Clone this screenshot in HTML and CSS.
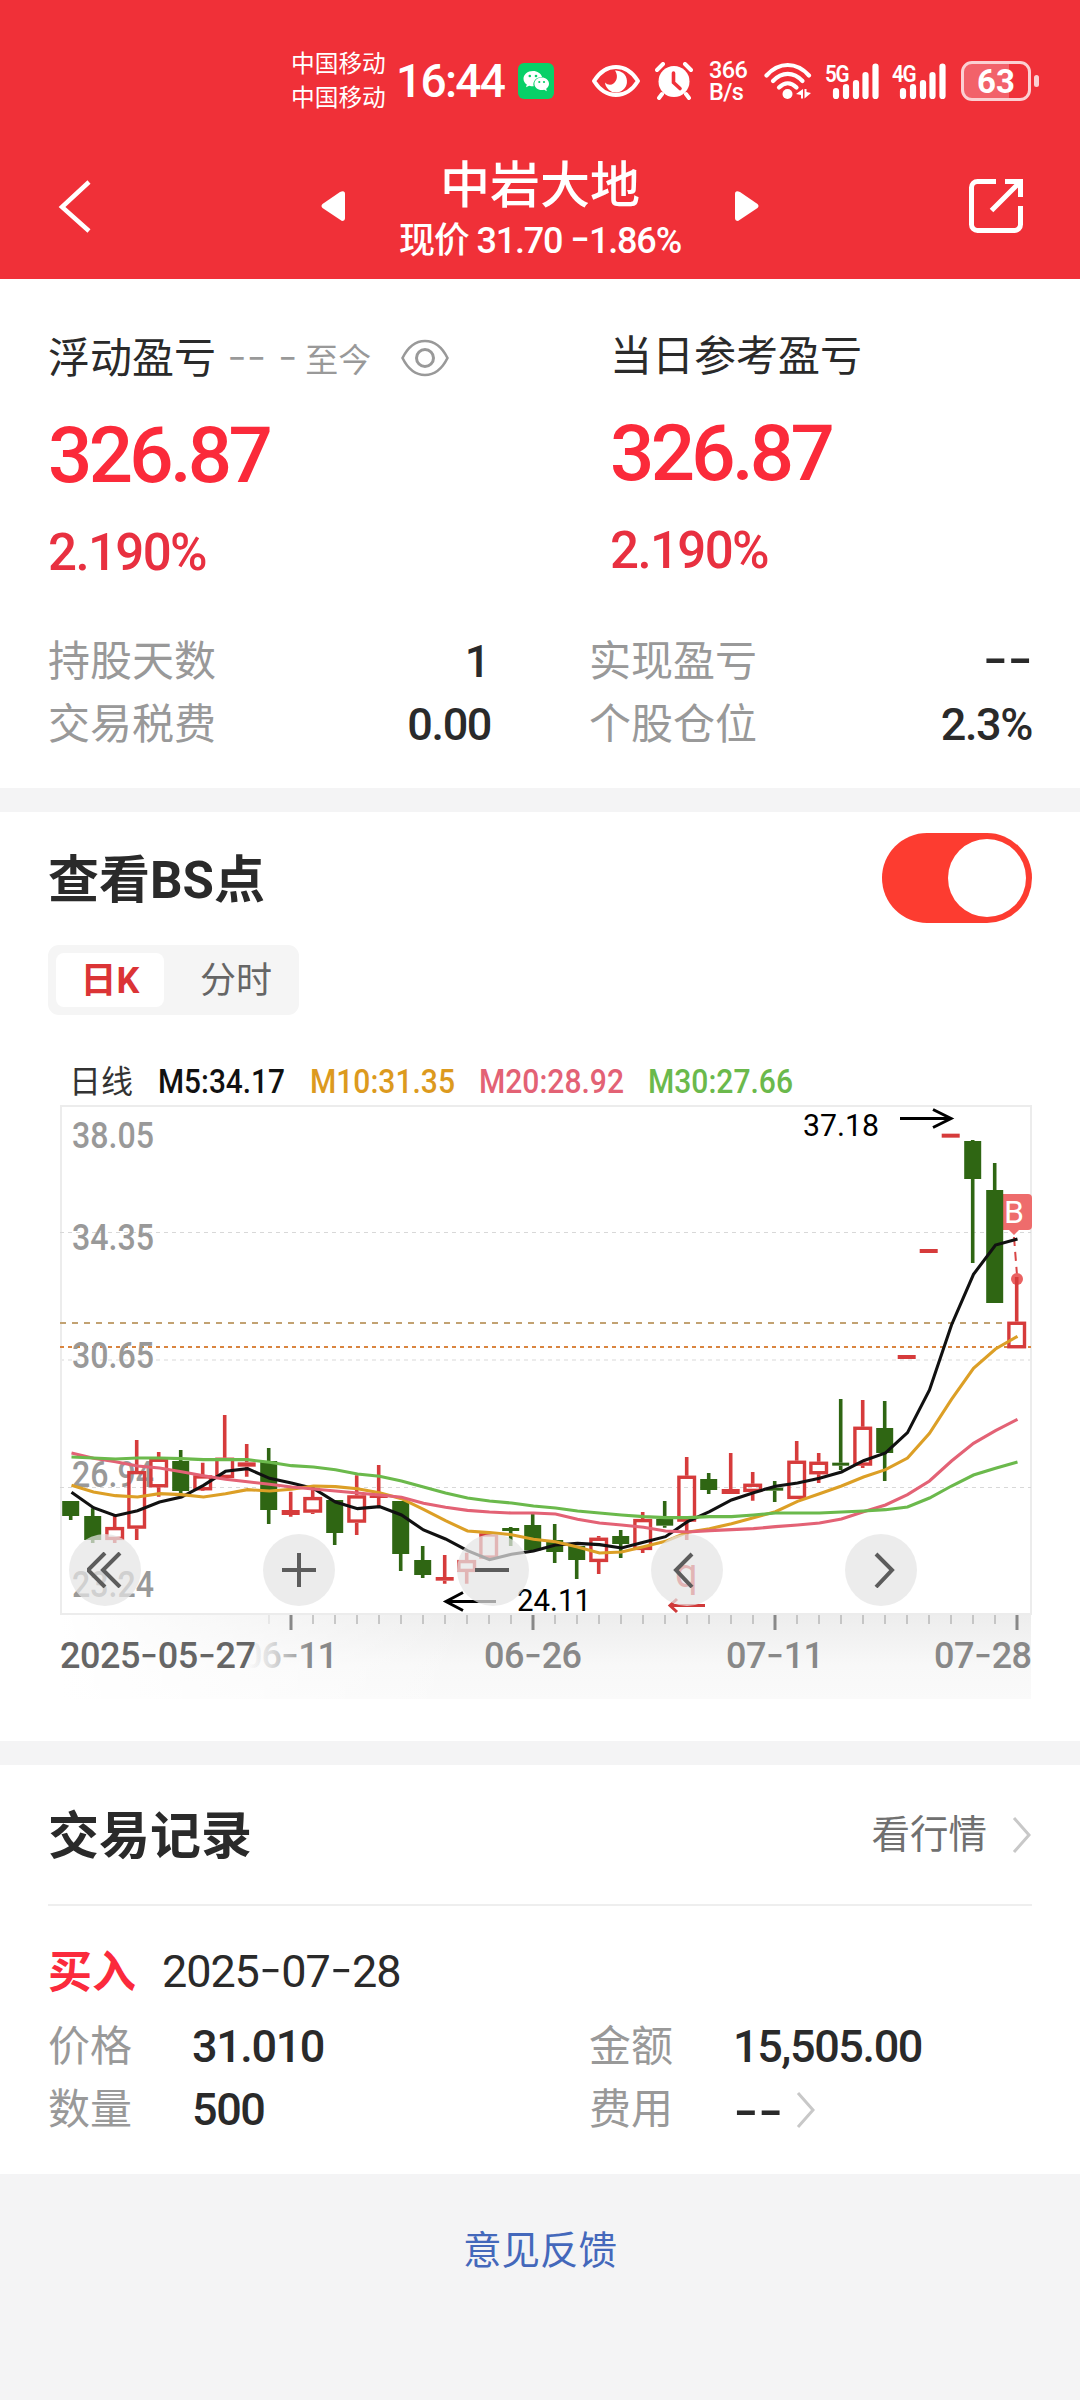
FILE: index.html
```html
<!DOCTYPE html>
<html lang="zh-CN">
<head>
<meta charset="utf-8">
<title>中岩大地</title>
<link rel="stylesheet" href="styles.css">
</head>
<body>
<header class="header">
  <div class="status">
    <div class="carrier"><span>中国移动</span><span>中国移动</span></div>
    <div class="clock">16:44</div>
    <svg class="wechat" width="36" height="36" viewBox="0 0 36 36"><rect width="36" height="36" rx="6" fill="#08d068"/><path d="M15 8c-5.500 0-9.500 3.500-9.500 7.700 0 2.300 1.300 4.400 3.300 5.800L8 24.300l3.200-1.600c1.300.4 2.600.6 3.800.6h.7c-1.500-5 2.600-9.300 8.400-9.300C23 10.500 19.300 8 15 8z" fill="#fff"/><path d="M31 20.800c0-3.600-3.300-6.300-7.300-6.300s-7.300 2.700-7.300 6.300 3.300 6.300 7.300 6.300c.9 0 1.700-.1 2.500-.4l2.600 1.500-.6-2.500c1.700-1.200 2.800-2.900 2.800-4.900z" fill="#fff"/><g fill="#08d068"><circle cx="11.800" cy="13" r="1.300"/><circle cx="18" cy="13" r="1.300"/><circle cx="21.300" cy="19" r="1.100"/><circle cx="26" cy="19" r="1.100"/></g></svg>
    <svg class="eye-solid" width="50" height="36" viewBox="0 0 50 36"><path d="M3 18C9 8.500 16.500 4 25 4s16 4.500 22 14c-6 9.500-13.500 14-22 14S9 27.500 3 18z" fill="none" stroke="#fff" stroke-width="4" stroke-linejoin="round"/><path d="M24 7.500a11 11 0 1 1-10 12c2.500 2.500 6 3 8.500 1 4-3 4.500-8.500 1.500-13z" fill="#fff"/></svg>
    <svg class="alarm" width="38" height="38" viewBox="0 0 38 38"><circle cx="19" cy="19.500" r="15.500" fill="#fff"/><path d="M18.500 11v9.500l6.500 6" fill="none" stroke="#f03038" stroke-width="3.600" stroke-linecap="round"/><path d="M2 8l6-6M36 8l-6-6M7 32l-3 4M31 32l3 4" stroke="#fff" stroke-width="4" stroke-linecap="round"/></svg>
    <div class="netspeed"><span>366</span><span>B/s</span></div>
    <svg class="wifi" width="50" height="38" viewBox="0 0 50 38"><g fill="none" stroke="#fff" stroke-width="4.200" stroke-linecap="round"><path d="M2.500 13.500C15-.5 32.500-.5 45 13.500"/><path d="M9 19c9-9.500 20.500-9.500 29.500 0"/><path d="M15 25.500c5.500-5.500 12-5.500 17.500 0"/></g><circle cx="23.500" cy="32" r="5" fill="#fff"/><path d="M32 32l7-5v9.500h-2V33zM47 31l-6.500 5.500V27h2v3z" fill="#fff"/></svg>
    <div class="signal"><span>5G</span><svg width="53" height="37" viewBox="0 0 53 37"><path d="M10 28v5M20 24v9M30 20v13M39.500 12v21M49.500 3.500V33" stroke="#fff" stroke-width="6.200" stroke-linecap="round"/></svg></div>
    <div class="signal"><span>4G</span><svg width="53" height="37" viewBox="0 0 53 37"><path d="M10 28v5M20 24v9M30 20v13M39.500 12v21M49.500 3.500V33" stroke="#fff" stroke-width="6.200" stroke-linecap="round"/></svg></div>
    <div class="battery"><div class="cell">63</div><i class="nub"></i></div>
  </div>
  <nav class="nav">
    <svg class="back" width="34" height="54" viewBox="0 0 34 54"><path d="M31 3L4 28l27 24" fill="none" stroke="#fff" stroke-width="4.500"/></svg>
    <svg width="24" height="30" viewBox="0 0 24 30"><path d="M24 3v24q0 3-3 3L1.500 17q-2-2 0-4L19 1q5-2 5 2z" fill="#fff"/></svg>
    <div class="stock">
      <h1>中岩大地</h1>
      <p>现价 31.70 <b class="dash">-</b>1.86%</p>
    </div>
    <svg width="24" height="30" viewBox="0 0 24 30"><path d="M0 3v24q0 3 3 3l19.500-13q2-2 0-4L5 1Q0-1 0 3z" fill="#fff"/></svg>
    <svg class="share" width="54" height="54" viewBox="0 0 54 54"><path d="M27 2.500H8.500a6 6 0 0 0-6 6v37a6 6 0 0 0 6 6h37a6 6 0 0 0 6-6V27M36 2.500h15.500V18M51 3L22.500 31.500" fill="none" stroke="#fff" stroke-width="5"/></svg>
  </nav>
</header>

<main>
  <section class="card summary">
    <div class="pl">
      <div class="pl-left">
        <div class="pl-label">浮动盈亏<span class="since"><span class="dash">-- -</span> 至今</span>
          <svg width="48" height="38" viewBox="0 0 48 38"><path d="M1.500 19C7 8 15 2 24 2s17 6 22.500 17C41 30 33 36 24 36S7 30 1.500 19z" fill="none" stroke="#999" stroke-width="2.600"/><circle cx="24" cy="19" r="8.500" fill="none" stroke="#999" stroke-width="3"/></svg></div>
        <div class="pl-value">326.87</div>
        <div class="pl-pct">2.190%</div>
      </div>
      <div class="pl-right">
        <div class="pl-label">当日参考盈亏</div>
        <div class="pl-value">326.87</div>
        <div class="pl-pct">2.190%</div>
      </div>
    </div>
    <dl class="facts">
      <div><dt>持股天数</dt><dd class="one">1</dd></div>
      <div><dt>实现盈亏</dt><dd><span class="dash">--</span></dd></div>
      <div><dt>交易税费</dt><dd>0.00</dd></div>
      <div><dt>个股仓位</dt><dd>2.3%</dd></div>
    </dl>
  </section>

  <section class="card chart-card">
    <div class="chart-head"><h2>查看BS点</h2><div class="toggle"><i></i></div></div>
    <div class="tabs"><span class="tab active">日K</span><span class="tab">分时</span></div>
    <div class="chart">
      <svg id="chart" width="1080" height="650" viewBox="0 1060 1080 650">
        <defs>
          <linearGradient id="axisV" x1="0" y1="0" x2="0" y2="1"><stop offset="0" stop-color="#ededed"/><stop offset=".6" stop-color="#f8f8f8"/><stop offset="1" stop-color="#fafafa"/></linearGradient>
          <linearGradient id="axisH" x1="0" y1="0" x2="1" y2="0"><stop offset="0" stop-color="#fff"/><stop offset=".42" stop-color="#fff" stop-opacity="0"/></linearGradient>
          <linearGradient id="fade" gradientUnits="userSpaceOnUse" x1="248" y1="0" x2="312" y2="0"><stop offset="0" stop-color="#888" stop-opacity="0"/><stop offset=".35" stop-color="#888" stop-opacity=".25"/><stop offset="1" stop-color="#888"/></linearGradient>
        </defs>
        <g class="legend">
          <text x="69" y="1093" class="cjk">日线</text>
          <text x="158" y="1093" textLength="127" lengthAdjust="spacingAndGlyphs" fill="#111">M5:34.17</text>
          <text x="310" y="1093" textLength="145" lengthAdjust="spacingAndGlyphs" fill="#dc9a1e">M10:31.35</text>
          <text x="479" y="1093" textLength="145" lengthAdjust="spacingAndGlyphs" fill="#e36275">M20:28.92</text>
          <text x="648" y="1093" textLength="145" lengthAdjust="spacingAndGlyphs" fill="#6bb94c">M30:27.66</text>
        </g>
        <rect x="60" y="1615" width="971" height="84" fill="url(#axisV)"/>
        <rect x="60" y="1615" width="971" height="84" fill="url(#axisH)"/>
        <rect x="61" y="1106" width="970" height="508" fill="none" stroke="#ececec" stroke-width="2"/>
        <path d="M60 1232.500H1031M60 1487.500H1031" stroke="#d8d8d8" stroke-dasharray="4 4"/>
        <path d="M60 1360H1031" stroke="#ececec" stroke-width="2" stroke-dasharray="4 4"/>
        <path d="M60 1323H1031" stroke="#c2a272" stroke-width="2" stroke-dasharray="6 6"/>
        <path d="M60 1347H1031" stroke="#d9843f" stroke-width="2" stroke-dasharray="4 4"/>
        <g class="scale">
          <text x="72" y="1148" textLength="82" lengthAdjust="spacingAndGlyphs">38.05</text>
          <text x="72" y="1250" textLength="82" lengthAdjust="spacingAndGlyphs">34.35</text>
          <text x="72" y="1367.500" textLength="82" lengthAdjust="spacingAndGlyphs">30.65</text>
          <text x="72" y="1487" textLength="82" lengthAdjust="spacingAndGlyphs">26.94</text>
          <text x="72" y="1597" textLength="82" lengthAdjust="spacingAndGlyphs">23.24</text>
        </g>
        <path d="M1003 1194h25q4 0 4 4v28q0 4-4 4h-9l-5 5-5-5h-6z" fill="#ee6c6c"/>
        <text x="1004" y="1223" class="mark">B</text>
        <path d="M1014 1237l3 38" stroke="#d94545" stroke-width="2" stroke-dasharray="9 6"/>
        <circle cx="1017" cy="1279" r="6" fill="#ea6262"/>
        <g id="candles"></g>
        <g id="averages"></g>
        <g class="note">
          <text x="803" y="1136" textLength="76" lengthAdjust="spacingAndGlyphs">37.18</text>
          <text x="517" y="1611" textLength="74" lengthAdjust="spacingAndGlyphs">24.11</text>
          <path d="M900 1118.500h50M933 1109.500l18 9-18 9M496 1601.500h-49M463 1592.500l-17 9 17 9"/>
          <path d="M705 1605.500h-35M677 1599l-7 6.500 7 6.500" class="red"/>
          <text x="675" y="1587" class="q">q</text>
        </g>
        <g id="ticks"></g>
        <g class="dates">
          <text x="60" y="1668" textLength="196" fill="#666">2025<tspan class="dash">-</tspan>05<tspan class="dash">-</tspan>27</text>
          <text x="242" y="1668" textLength="96" fill="url(#fade)">06<tspan class="dash">-</tspan>11</text>
          <text x="484" y="1668" textLength="98">06<tspan class="dash">-</tspan>26</text>
          <text x="726" y="1668" textLength="98">07<tspan class="dash">-</tspan>11</text>
          <text x="934" y="1668" textLength="98">07<tspan class="dash">-</tspan>28</text>
        </g>
      </svg>
      <div class="controls">
        <span><svg width="36" height="36" viewBox="0 0 36 36"><path d="M18 1L1 18l17 17M33 1L16 18l17 17"/></svg></span>
        <span><svg width="36" height="36" viewBox="0 0 36 36"><path d="M1 18h34M18 1v34"/></svg></span>
        <span><svg width="36" height="36" viewBox="0 0 36 36"><path d="M0 18h34"/></svg></span>
        <span><svg width="36" height="36" viewBox="0 0 36 36"><path d="M23 2L7 18l16 17"/></svg></span>
        <span><svg width="36" height="36" viewBox="0 0 36 36"><path d="M13 2l16 16-16 17"/></svg></span>
      </div>
    </div>
  </section>

  <section class="card trades">
    <div class="trades-head">
      <h2>交易记录</h2>
      <div class="more">看行情<svg width="20" height="36" viewBox="0 0 20 36"><path d="M2 1l15 17L2 35" fill="none" stroke="#c8c8c8" stroke-width="3"/></svg></div>
    </div>
    <div class="trade-title"><b>买入</b><span class="date">2025<span class="dash">-</span>07<span class="dash">-</span>28</span></div>
    <dl class="trade">
      <div><dt>价格</dt><dd>31.010</dd></div>
      <div><dt>金额</dt><dd>15,505.00</dd></div>
      <div><dt>数量</dt><dd>500</dd></div>
      <div><dt>费用</dt><dd><span class="dash">--</span><svg width="20" height="36" viewBox="0 0 20 36"><path d="M2 1l15 17L2 35" fill="none" stroke="#c8c8c8" stroke-width="3"/></svg></dd></div>
    </dl>
  </section>
</main>
<footer class="footer">意见反馈</footer>
<script src="chart.js"></script>
</body>
</html>
```
FILE: styles.css
```css
* { box-sizing: border-box; margin: 0; padding: 0; }
body {
  width: 1080px;
  min-height: 2400px;
  background: #f4f4f5;
  color: #2a2a2a;
  font-family: Roboto, "Noto Sans CJK SC", sans-serif;
}
svg { display: block; }
h1, h2 { font-weight: 700; }
.dash { font-family: Inter, sans-serif; font-weight: inherit; }

/* Header */
.header { height: 279px; background: #f03038; color: #fff; }
.status {
  height: 133px;
  padding: 29px 0 0 291px;
  display: grid;
  grid-template-columns: 106px 121px 73px 64px 54px 55px 62px 67px 68px 80px;
  align-items: center;
}
.carrier { display: flex; flex-direction: column; font-size: 23.7px; line-height: 34px; white-space: nowrap; }
.clock { font-size: 46px; font-weight: 500; letter-spacing: -1.7px; line-height: 50px; margin-left: -1px; }
.netspeed { display: flex; flex-direction: column; font-size: 23.5px; font-weight: 500; line-height: 22px; letter-spacing: -0.6px; }
.signal { position: relative; width: 53px; }
.signal span { position: absolute; left: -1px; top: -1px; font-size: 24px; line-height: 24px; font-weight: 600; letter-spacing: -1.500px; transform: scaleX(.86); transform-origin: left; }
.battery { display: flex; align-items: center; gap: 3px; }
.cell {
  width: 70px; height: 40px;
  border: 3px solid #fbd0d2; border-radius: 11px;
  background: linear-gradient(90deg, #f2626a 45px, transparent 45px);
  font-size: 33px; font-weight: 700; line-height: 35px; text-align: center;
}
.nub { width: 5px; height: 12px; border-radius: 3px; background: #fbd0d2; }
.nav { height: 146px; display: grid; grid-template-columns: 263px 24px 390px 24px 210px 54px; padding-left: 58px; align-items: center; }
.share { grid-column: 6; }
.stock { text-align: center; padding-top: 9px; }
.stock h1 { font-size: 50px; font-weight: 500; line-height: 60px; }
.stock p { font-size: 36px; font-weight: 500; line-height: 50px; letter-spacing: -1.2px; }
.stock .dash { font-size: 44px; font-weight: 400; line-height: 40px; }

/* Profit and loss summary */
.card { background: #fff; padding: 0 48px; }
.summary { height: 509px; margin-bottom: 24px; padding-top: 50px; }
.pl { display: grid; grid-template-columns: 562px 1fr; height: 301px; }
.pl-right { margin-top: -2px; }
.pl-label { display: flex; align-items: center; height: 60px; font-size: 42px; line-height: 60px; }
.since { margin: 4px 30px 0 11px; font-size: 33px; color: #999; }
.since .dash { font-size: 44px; font-weight: 300; line-height: 40px; letter-spacing: -0.5px; }
.pl-label svg { margin-top: -3px; }
.pl-value { font-size: 78px; line-height: 90px; margin-top: 22px; font-weight: 500; letter-spacing: -3.7px; color: #fb2a3a; }
.pl-pct { font-size: 51px; line-height: 60px; margin-top: 22px; font-weight: 500; letter-spacing: -1.6px; color: #e83040; }
.facts { display: grid; grid-template-columns: 443px 443px; column-gap: 98px; }
.facts > div { display: flex; justify-content: space-between; height: 63px; line-height: 63px; }
dt { font-size: 42px; color: #999; }
dd { font-size: 45px; font-weight: 500; letter-spacing: -1.4px; }
dd .dash { display: inline-block; font-size: 56px; font-weight: 400; line-height: 56px; letter-spacing: -1px; }
.facts .one { padding-right: 2px; }

/* Chart */
.chart-card { height: 929px; margin-bottom: 24px; padding-top: 21px; }
.chart-head { display: flex; justify-content: space-between; align-items: center; height: 90px; }
h2 { font-size: 51px; line-height: 70px; color: #2a2a2a; padding-top: 5px; }
.toggle { width: 150px; height: 90px; padding: 6px; border-radius: 45px; background: #fd3c30; }
.toggle i { display: block; width: 78px; height: 78px; margin-left: auto; border-radius: 50%; background: #fff; }
.tabs { display: flex; gap: 18px; width: 251px; height: 70px; margin-top: 22px; padding: 8px; border-radius: 11px; background: #f5f5f5; font-size: 36px; line-height: 56px; color: #666; }
.tab { flex: 0 0 108px; text-align: center; }
.tab.active { border-radius: 8px; background: #fff; color: #db3436; font-weight: 700; }
.chart { position: relative; margin: 45px -48px 0; }
.legend text { font-size: 34px; font-weight: 500; }
.legend .cjk { font-size: 32px; font-weight: 400; fill: #333; }
.scale text { font-size: 36px; font-weight: 500; fill: #999; }
.dates text { font-size: 36px; font-weight: 500; }
.dates { fill: #888; }
.dates .dash { font-size: 40px; font-weight: 400; }
.mark { font-size: 32px; fill: #fff; }
.note text { font-size: 31px; fill: #000; }
.note path { fill: none; stroke: #000; stroke-width: 3; }
.note .red { stroke: #d03a3a; }
.note .q { font-size: 40px; fill: #d93a3a; }
.controls { position: absolute; left: 69px; top: 474px; display: flex; gap: 122px; }
.controls span { width: 72px; height: 72px; border-radius: 50%; padding: 18px; background: rgba(229, 229, 229, .72); }
.controls path { fill: none; stroke: #5c5c5c; stroke-width: 4; }

/* Trades */
.trades { height: 409px; padding-top: 20px; }
.trades-head { display: flex; justify-content: space-between; align-items: center; height: 121px; padding-bottom: 20px; border-bottom: 2px solid #eee; }
.more { display: flex; align-items: center; gap: 25px; font-size: 38.500px; color: #707070; line-height: 50px; }
.trade-title { display: flex; align-items: center; gap: 26px; height: 64px; margin-top: 35px; line-height: 64px; font-size: 44px; }
.trade-title b { color: #fb2a3c; }
.date { font-size: 45px; letter-spacing: -1.1px; margin-top: -3px; }
.date .dash { font-size: 52px; font-weight: 300; line-height: 50px; }
.trade { display: grid; grid-template-columns: 541px 1fr; margin-top: 10px; }
.trade > div { display: grid; grid-template-columns: 144px 1fr; height: 63px; line-height: 63px; }
.trade dd { display: flex; align-items: center; gap: 13px; }
.footer { height: 226px; padding-top: 47px; text-align: center; font-size: 38.500px; line-height: 60px; color: #4468bb; }
```
FILE: chart.js
```js
// Candles: [rising?, high, body top, body bottom, low], third-pixels below y = 1370.
const candles = [
  [0,393,393,438,450],[0,415,438,510,519],[1,435,471,510,519],[1,210,303,476,510],
  [1,246,266,352,380],[0,240,273,363,372],[1,278,316,361,363],[1,135,263,324,324],
  [1,222,277,290,320],[0,234,273,420,462],[1,365,420,435,440],[1,360,381,428,432],
  [0,390,390,489,525],[1,316,376,458,495],[1,285,376,384,408],[0,393,393,552,603],
  [0,528,570,615,624],[1,555,621,632,641],[1,548,570,606,641],[1,490,490,566,566],
  [0,471,474,483,528],[0,432,465,541,541],[0,462,510,546,579],[0,528,528,570,627],
  [1,498,503,576,612],[0,480,498,522,564],[1,426,447,540,549],[0,393,447,467,473],
  [1,261,317,455,510],[0,309,327,360,372],[1,249,357,372,372],[1,306,341,366,392],
  [0,333,353,362,396],[1,213,272,387,387],[1,249,275,313,339],[0,87,278,287,300],
  [1,90,170,287,294],[0,93,174,249,333],[1,-45,-45,-33,-33],[1,-363,-363,-351,-351],
  [1,-709,-709,-697,-697],[0,-690,-687,-573,-321],[0,-621,-540,-201,-201],[1,-279,-145,-65,-65]
];
const averages = [
  ["#111", [367,413,437,422,396,381,346,304,296,325,339,355,396,416,410,435,480,507,542,569,553,543,525,520,524,534,517,500,455,425,390,368,349,339,325,306,272,249,188,60,-135,-287,-375,-393]],
  ["#dc9f26", [346,366,377,381,371,374,381,371,359,363,358,348,350,356,368,386,418,452,483,488,494,508,515,531,549,546,530,514,487,476,461,443,425,394,371,348,321,299,264,190,88,-5,-63,-101]],
  ["#e36275", [249,265,275,288,294,305,317,328,335,343,351,357,363,369,375,382,400,412,421,426,429,429,432,448,459,465,472,483,486,482,479,476,470,465,459,447,425,405,374,333,273,220,182,148]],
  ["#6bb94c", [261,264,267,264,264,266,269,269,269,277,287,291,299,312,319,333,351,369,384,393,399,408,414,423,429,435,440,443,443,440,440,435,429,429,429,426,423,419,411,384,348,315,295,276]]
];
const cx = i => 70.7 + 22 * i;
const cy = v => 1370 + v / 3;
const put = (id, markup) => { document.getElementById(id).innerHTML = markup; };

put("candles", candles.map(([up, high, top, bottom, low], i) => {
  const x = cx(i), h = (bottom - top) / 3;
  const color = up ? "#d63b3b" : "#2f6613";
  const wick = `M${x} ${cy(high)}V${cy(top)}M${x} ${cy(bottom)}V${cy(low)}`;
  const body = up && h > 6
    ? `<rect x="${x - 7.8}" y="${cy(top) + 1.6}" width="15.600" height="${h - 3.2}" fill="none" stroke="${color}" stroke-width="3.400"/>`
    : `<rect x="${x - (up ? 9 : 8.5)}" y="${cy(top)}" width="${up ? 18 : 17}" height="${h}" fill="${color}"/>`;
  return `<path d="${wick}" stroke="${color}" stroke-width="3.600"/>${body}`;
}).join(""));

put("averages", averages.map(([color, values]) =>
  `<polyline points="${values.map((v, i) => `${cx(i) + 0.8},${cy(v)}`).join(" ")}" fill="none" stroke="${color}" stroke-width="3.100"/>`
).join(""));

let ticks = "";
for (let i = 9; i < 44; i++) {
  const major = (i - 10) % 11 === 0;
  ticks += `<path d="M${cx(i) + 0.3} 1615v${major ? 15 : 9}" stroke="${i === 9 ? "#ddd" : major ? "#888" : "#aaa"}" stroke-width="${major ? 3 : 1.2}"/>`;
}
put("ticks", ticks);
```
